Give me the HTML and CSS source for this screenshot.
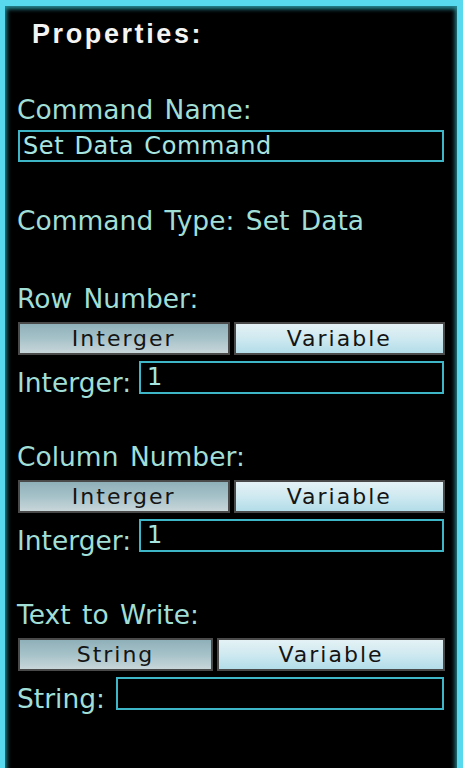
FILE: index.html
```html
<!DOCTYPE html>
<html>
<head>
<meta charset="utf-8">
<link rel="stylesheet" href="styles.css">
</head>
<body>
<div class="panel">
  <div class="title">Properties:</div>

  <div class="label first">Command Name:</div>
  <div class="field wide">Set Data Command</div>

  <div class="label gap-type">Command Type: Set Data</div>

  <div class="label section">Row Number:</div>
  <div class="toggle even">
    <div class="btn on">Interger</div>
    <div class="btn off">Variable</div>
  </div>
  <div class="inrow">
    <div class="inlabel">Interger:</div>
    <div class="field grow int">1</div>
  </div>

  <div class="label section">Column Number:</div>
  <div class="toggle even">
    <div class="btn on">Interger</div>
    <div class="btn off">Variable</div>
  </div>
  <div class="inrow">
    <div class="inlabel">Interger:</div>
    <div class="field grow int">1</div>
  </div>

  <div class="label section">Text to Write:</div>
  <div class="toggle uneven">
    <div class="btn on">String</div>
    <div class="btn off">Variable</div>
  </div>
  <div class="inrow">
    <div class="inlabel str">String:</div>
    <div class="field grow"></div>
  </div>
</div>
</body>
</html>
```

FILE: styles.css
```css
html, body {
  margin: 0;
  padding: 0;
  background: #000;
  height: 100%;
  overflow: hidden;
}

.panel {
  box-sizing: border-box;
  width: 463px;
  height: 800px;
  border-top: 6px solid #58d9ee;
  border-left: 5px solid #58d9ee;
  border-right: 6px solid #58d9ee;
  background: #000;
  box-shadow: inset 2px 3px 4px rgba(40, 140, 150, 0.9), inset -2px 0 4px rgba(40, 140, 150, 0.9);
  padding: 13px 12px 0 12px;
  font-family: "DejaVu Sans", Verdana, sans-serif;
  color: #a0ded6;
}

.title {
  margin-left: 15px;
  font-family: "Liberation Sans", Arial, sans-serif;
  font-size: 27px;
  font-weight: bold;
  line-height: 30px;
  height: 30px;
  letter-spacing: 2.6px;
  color: #f4f4f4;
}

.label {
  font-size: 26.5px;
  line-height: 30px;
  height: 30px;
  word-spacing: 3px;
  white-space: nowrap;
}

.label.first { margin-top: 46px; }
.label.gap-type { margin-top: 44px; }
.label.section { margin-top: 48px; }

.field {
  box-sizing: border-box;
  height: 32px;
  border: 2px solid #3fb6c8;
  font-size: 24px;
  line-height: 28px;
  letter-spacing: 0.6px;
  word-spacing: 2px;
  padding-left: 3px;
  color: #a8e4e0;
  white-space: nowrap;
}

.field.wide {
  margin-top: 5px;
  margin-left: 1px;
  margin-right: 1px;
}

.toggle {
  display: flex;
  gap: 4px;
  margin-top: 8px;
  margin-left: 1px;
  height: 33px;
}

.toggle.even .btn { flex: 1; }
.toggle.uneven .btn.on { width: 195px; flex: none; }
.toggle.uneven .btn.off { flex: 1; }

.btn {
  box-sizing: border-box;
  height: 33px;
  border: 2px solid #4a4a4a;
  font-family: "DejaVu Sans", Verdana, sans-serif;
  font-size: 22px;
  line-height: 29px;
  letter-spacing: 2px;
  color: #141414;
  text-align: center;
}

.btn.on {
  background: linear-gradient(to bottom, #8fb0b9 0%, #a6c2c9 50%, #c8d6d9 100%);
}

.btn.off {
  background: linear-gradient(to bottom, #e4f2f5 0%, #cfe9f0 50%, #b2dde9 100%);
}

.inrow {
  display: flex;
  align-items: flex-start;
  margin-top: 6px;
  height: 33px;
}

.inlabel {
  font-size: 26.5px;
  line-height: 30px;
  margin-top: 7px;
  width: 122px;
  white-space: nowrap;
}

.inlabel.str { width: 99px; }

.field.grow {
  flex: 1;
  height: 33px;
  margin-right: 1px;
}

.field.int {
  padding-left: 6px;
}
```
